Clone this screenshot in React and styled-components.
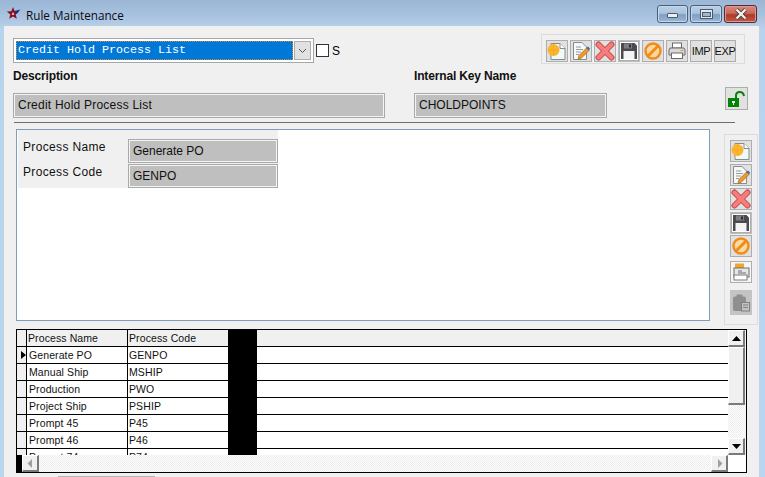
import React from "react";
import styled, { createGlobalStyle } from "styled-components";

const Global = createGlobalStyle`
  html, body { margin: 0; padding: 0; background: #bcd4ec; overflow: hidden; }
  * { box-sizing: border-box; }
`;

const Win = styled.div`
  width: 765px; height: 477px; overflow: hidden; display: flex; flex-direction: column;
  background: linear-gradient(180deg, #9cb7d5 0px, #a6c1de 14px, #bad3ec 30px, #bcd5ee 100%);
  font-family: "Liberation Sans", Arial, sans-serif; color: #000;
`;
const TitleBar = styled.div`
  height: 26px; flex: none; display: flex; align-items: flex-start; padding: 6px 8px 0 6px;
`;
const TitleText = styled.div`
  font-family: "Open Sans", sans-serif; font-size: 11.7px; line-height: 18px; margin-left: 5px; color: #0a0a14;
`;
const Caption = styled.div`
  margin-left: auto; margin-top: -1px; display: flex; gap: 2px; align-items: flex-start;
`;
const CapBtn = styled.div`
  width: ${p => p.$w}px; height: 18px; border-radius: 3px; display: flex; align-items: center; justify-content: center;
  border: 1px solid ${p => p.$close ? "#5e2530" : "#46607e"};
  box-shadow: inset 0 0 0 1px ${p => p.$close ? "#d99b90" : "#c6d8ea"};
  background: ${p => p.$close
    ? "linear-gradient(180deg,#d98a7e 0%,#c9685a 45%,#b03a28 55%,#c05a48 100%)"
    : "linear-gradient(180deg,#b9cfe6 0%,#a9c3de 45%,#7f9fc2 55%,#9ab8d6 100%)"};
`;
const MinGlyph = styled.span`
  width: 11px; height: 5px; margin-top: 3px; background: #e9eef3; border: 1px solid #4c5a6c; border-radius: 1px;
`;
const MaxGlyph = styled.span`
  width: 13px; height: 10px; background: #dfe7ef; border: 1px solid #4c5a6c; display: flex; align-items: center; justify-content: center;
  &::after { content: ""; width: 7px; height: 3px; background: #9fb6cf; border: 1px solid #4c5a6c; }
`;

const Content = styled.div`
  flex: 1; margin: 0 6px 0 4px; background: #f0f0f0; display: flex; flex-direction: column; padding: 8px 0 0 9px; position: relative;
`;
const TopRow = styled.div`
  display: flex; align-items: flex-start; height: 34px;
`;
const Combo = styled.div`
  width: 301px; height: 25px; margin-top: 4px; border: 1px solid #a6a6a6; background: #fff; padding: 2px; display: flex;
`;
const ComboValue = styled.div`
  flex: 1; background: #0078d7; color: #fff; font-family: "Liberation Mono", monospace; font-size: 11.67px; line-height: 19px;
  padding-left: 2px; outline: 1px dotted #d08a40; outline-offset: -1px;
`;
const ComboArrow = styled.div`
  width: 17px; margin-left: 1px; background: #e1e1e1; border: 1px solid #adadad; display: flex; align-items: center; justify-content: center;
`;
const Check = styled.div`
  width: 13px; height: 13px; border: 1px solid #333; background: #fff; margin: 10px 0 0 2px;
`;
const CheckLabel = styled.div`
  font-size: 12px; line-height: 14px; margin: 10px 0 0 3px;
`;
const TopTools = styled.div`
  margin-left: auto; margin-right: 14px; width: 204px; height: 30px; border: 1px solid #dcdcdc; display: flex; gap: 2px; padding: 5px 0 0 4px;
`;
const IconBtn = styled.div`
  width: 22px; height: 22px; flex: none; border: 1px solid #adadad; background: ${p => p.$active ? "#fff" : "#e1e1e1"};
  display: flex; align-items: center; justify-content: center; font-size: 11px; letter-spacing: -0.4px; color: #111;
  ${p => p.$active && "box-shadow: inset 0 0 0 1px #adadad; border-color:#bdbdbd;"}
  ${p => p.$off && "background:#c4c4c4; border-color:#c4c4c4;"}
  ${p => p.$pale && "background:#f6f6f6;"}
`;
const Labels = styled.div`
  display: grid; grid-template-columns: 401px auto; height: 17px; margin-bottom: 8px; align-items: center;
`;
const BoldLabel = styled.div`
  font-size: 12px; font-weight: 700; line-height: 14px; color: #111; margin-top: -1px;
  letter-spacing: -0.15px;
`;
const KeyRow = styled.div`
  display: flex; align-items: flex-start; height: 29px; position: relative;
`;
const ReadField = styled.div`
  width: ${p => p.$w}px; height: ${p => p.$h || 25}px; flex: none; background: #bfbfbf; border: 1px solid #a9a9a9;
  box-shadow: inset 0 0 0 1px #f4f4f4; font-size: 12px; line-height: ${p => (p.$h || 25) - 2}px; padding-left: 4px;
  color: #111; margin-left: ${p => p.$ml || 0}px; letter-spacing: ${p => p.$ls || 0}px; white-space: nowrap;
`;
const LockBtn = styled(IconBtn)`
  position: absolute; left: 712px; top: -6px; width: 23px; height: 23px;
`;
const Rule = styled.div`
  width: 721px; height: 1px; background: #6d6d6d; margin-left: 1px;
`;
const Middle = styled.div`
  display: flex; margin-top: 6px; height: 196px; align-items: flex-start;
`;
const Panel = styled.div`
  width: 694px; height: 192px; margin-left: 3px; background: #fff; border: 1px solid #7f9db9; padding: 0 0 0 1px;
`;
const FormBlock = styled.div`
  width: 260px; height: 58px; background: #f0f0f0; padding: 9px 0 0 0; display: grid; grid-template-columns: 110px 150px; grid-auto-rows: 25px;
`;
const FormLabel = styled.div`
  font-size: 12px; line-height: 14px; padding-left: 5px; letter-spacing: 0.35px; color: #111; margin-top: 1px;
`;
const SideTools = styled.div`
  width: 34px; height: 191px; margin: 5px 0 0 14px; border: 1px solid #dcdcdc; display: flex; flex-direction: column; align-items: center; padding-top: 5px;
`;
const SideBtn = styled(IconBtn)`
  margin-bottom: ${p => p.$mb}px; height: ${p => p.$h || 22}px;
`;
const Grid = styled.div`
  width: 731px; height: 144px; margin: 4px 0 0 3px; border: 1px solid #000; background: #fff; position: relative; overflow: hidden; display: flex; flex-direction: column;
`;
const Rows = styled.div`
  height: 125px; overflow: hidden; width: 712px;
`;
const Row = styled.div`
  display: grid; grid-template-columns: 10px 101px 100px 29px 1fr; height: 17px; border-bottom: 1px solid #000; font-size: 10.5px; letter-spacing: 0.1px; line-height: 16px; color: #111;
  background: ${p => p.$head ? "#f0f0f0" : "#fff"};
`;
const Indicator = styled.div`
  background: #f0f0f0; border-right: 1px solid #000; display: flex; align-items: center; justify-content: flex-end; padding-right: 0;
`;
const NameCell = styled.div`
  border-right: 1px solid #000; padding-left: ${p => p.$head ? 1 : 2}px; white-space: nowrap;
`;
const CodeCell = styled.div`
  padding-left: 1px;
`;
const BlackCell = styled.div`
  background: #000; margin-bottom: -1px;
`;
const VScroll = styled.div`
  position: absolute; right: 0; top: 0; width: 18px; height: 125px; display: flex; flex-direction: column;
  background-color: #f4f4f4; background-image: repeating-conic-gradient(#fff 0 25%, #ececec 0 50%); background-size: 2px 2px;
`;
const ScrollBtn = styled.div`
  width: ${p => p.$w || 17}px; height: ${p => p.$h || 17}px; flex: none; background: #f0f0f0; border-style: solid; border-width: 1px 2px 2px 1px;
  border-color: #fff #7a7a7a #7a7a7a #fff; display: flex; align-items: center; justify-content: center; margin-top: ${p => p.$mt || 0}px;
`;
const HScroll = styled.div`
  height: 17px; flex: none; display: flex; margin-right: 18px;
  background-color: #f4f4f4; background-image: repeating-conic-gradient(#fff 0 25%, #ececec 0 50%); background-size: 2px 2px;
`;
const HBlack = styled.div`
  width: 5px; background: #000;
`;
const HRight = styled.div`
  margin-left: auto;
`;
const BottomStrip = styled.div`
  position: absolute; left: 54px; bottom: 0; width: 97px; height: 1px; background: #b3b3b3;
`;

const Tri = ({ d, c = "#000", w = 9, h = 9 }) => (
  <svg width={w} height={h} viewBox="0 0 9 9"><path d={d} fill={c} /></svg>
);

const StarIcon = () => (
  <svg width="15" height="14" viewBox="0 0 15 14">
    <path d="M7 1L8.7 5.2L13.2 5.5L9.7 8.4L10.8 12.8L7 10.4L3.2 12.8L4.3 8.4L0.8 5.5L5.3 5.2Z" fill="#8a1020" />
    <path d="M8.5 5L14.5 3.5L10 8Z" fill="#1c2a9c" />
    <path d="M7 6L8.3 8.8H5.7Z" fill="#f3e9ea" />
  </svg>
);
const NewIcon = () => (
  <svg width="20" height="20" viewBox="0 0 20 20">
    <path d="M4 2.5H13L18 7.5V18.5H4Z" fill="#eefafa" stroke="#8a8a8a" />
    <path d="M13 2.5V7.5H18" fill="#fff" stroke="#8a8a8a" />
    <circle cx="6.5" cy="9" r="6" fill="#fbb62e" />
    <path d="M1 9H12M6.5 3V15" stroke="#f59d20" opacity="0.5" />
  </svg>
);
const EditIcon = () => (
  <svg width="20" height="20" viewBox="0 0 20 20">
    <path d="M2.5 1.5H11L15.5 6V18.5H2.5Z" fill="#f4f8f8" stroke="#8a8a8a" />
    <path d="M5 6H10M5 8.5H12M5 11H10M5 13.5H8" stroke="#9a9a9a" />
    <path d="M7 18.5L8 14.5L15.5 7L18 9.5L10.5 17Z" fill="#ee9a28" stroke="#a4661c" strokeWidth="0.7" />
    <path d="M15.5 7L17 5.5L19 7.5L18 9.5Z" fill="#2a6fc4" />
  </svg>
);
const XIcon = () => (
  <svg width="20" height="20" viewBox="0 0 20 20">
    <path d="M3.5 3.5L16.5 16.5M16.5 3.5L3.5 16.5" stroke="#c24a4a" strokeWidth="6" strokeLinecap="round" />
    <path d="M3.5 3.5L16.5 16.5M16.5 3.5L3.5 16.5" stroke="#f77c7c" strokeWidth="4" strokeLinecap="round" />
  </svg>
);
const SaveIcon = () => (
  <svg width="18" height="18" viewBox="0 0 18 18">
    <path d="M1 1H14.5L17 3.5V17H1Z" fill="#4a4a50" />
    <rect x="4" y="1.5" width="8" height="5" fill="#7e7e84" />
    <rect x="9" y="2.5" width="2" height="3" fill="#2c2c30" />
    <rect x="3.5" y="9" width="11" height="8" fill="#f4f4f4" />
  </svg>
);
const BanIcon = () => (
  <svg width="20" height="20" viewBox="0 0 20 20">
    <circle cx="10" cy="10" r="7.5" fill="#fbd9a0" stroke="#f08c18" strokeWidth="2.4" />
    <path d="M4.8 15.2L15.2 4.8" stroke="#f08c18" strokeWidth="3" />
  </svg>
);
const PrinterIcon = () => (
  <svg width="18" height="18" viewBox="0 0 18 18">
    <rect x="4.5" y="1" width="9" height="5" fill="#fff" stroke="#6a6a6a" />
    <path d="M2 6H16L17 8V13H1V8Z" fill="#d9d9d9" stroke="#6a6a6a" />
    <path d="M12.5 8.5H15.5" stroke="#e8a33c" />
    <rect x="3.5" y="11" width="11" height="5.5" fill="#fff" stroke="#6a6a6a" />
  </svg>
);
const PrintPreviewIcon = () => (
  <svg width="20" height="20" viewBox="0 0 20 20">
    <rect x="4" y="1.5" width="9" height="6" fill="#f2a52c" />
    <rect x="3" y="6" width="15" height="9" fill="#e6e6e6" stroke="#6e6e6e" />
    <path d="M7 9H11M7 11H15" stroke="#6e6e6e" />
    <rect x="3" y="13" width="13" height="5" fill="#fff" stroke="#7a7a7a" />
  </svg>
);
const PasteIcon = () => (
  <svg width="20" height="20" viewBox="0 0 20 20">
    <rect x="2" y="3.5" width="13" height="14.5" rx="2" fill="#8f8f8f" />
    <rect x="5.5" y="1.5" width="6" height="4" rx="1" fill="#8f8f8f" />
    <rect x="10.5" y="9.5" width="8" height="8.5" fill="#c4c4c4" stroke="#7f7f7f" />
    <path d="M12 12H17M12 14.5H17" stroke="#7f7f7f" />
  </svg>
);
const LockIcon = () => (
  <svg width="19" height="18" viewBox="0 0 19 18">
    <path d="M9 8.5V5.5C9 3 10.6 2 12.8 2C15 2 16.5 3 17 6" fill="none" stroke="#058205" strokeWidth="2" />
    <rect x="1" y="8" width="11" height="9" fill="#058205" />
    <rect x="5" y="11" width="3" height="2" fill="#e8f4e8" />
    <rect x="6" y="12" width="1" height="3" fill="#e8f4e8" />
  </svg>
);

const data = [
  ["Generate PO", "GENPO"],
  ["Manual Ship", "MSHIP"],
  ["Production", "PWO"],
  ["Project Ship", "PSHIP"],
  ["Prompt 45", "P45"],
  ["Prompt 46", "P46"],
  ["Prompt 74", "P74"],
];

export default function App() {
  return (
    <Win>
      <Global />
      <TitleBar>
        <StarIcon />
        <TitleText>Rule Maintenance</TitleText>
        <Caption>
          <CapBtn $w={31}><MinGlyph /></CapBtn>
          <CapBtn $w={32}><MaxGlyph /></CapBtn>
          <CapBtn $w={33} $close>
            <svg width="14" height="12" viewBox="0 0 14 12"><path d="M2.5 1.5L11.5 10.5M11.5 1.5L2.5 10.5" stroke="#4a3a3a" strokeWidth="4" /><path d="M2.5 1.5L11.5 10.5M11.5 1.5L2.5 10.5" stroke="#f2efee" strokeWidth="2.4" /></svg>
          </CapBtn>
        </Caption>
      </TitleBar>
      <Content>
        <TopRow>
          <Combo>
            <ComboValue>Credit Hold Process List</ComboValue>
            <ComboArrow>
              <svg width="9" height="6" viewBox="0 0 9 6"><path d="M1 1L4.5 4.5L8 1" fill="none" stroke="#555" /></svg>
            </ComboArrow>
          </Combo>
          <Check />
          <CheckLabel>S</CheckLabel>
          <TopTools>
            <IconBtn><NewIcon /></IconBtn>
            <IconBtn><EditIcon /></IconBtn>
            <IconBtn><XIcon /></IconBtn>
            <IconBtn $active><SaveIcon /></IconBtn>
            <IconBtn><BanIcon /></IconBtn>
            <IconBtn><PrinterIcon /></IconBtn>
            <IconBtn>IMP</IconBtn>
            <IconBtn>EXP</IconBtn>
          </TopTools>
        </TopRow>
        <Labels>
          <BoldLabel>Description</BoldLabel>
          <BoldLabel>Internal Key Name</BoldLabel>
        </Labels>
        <KeyRow>
          <ReadField $w={372} $ls={0.22}>Credit Hold Process List</ReadField>
          <ReadField $w={193} $ml={29}>CHOLDPOINTS</ReadField>
          <LockBtn><LockIcon /></LockBtn>
        </KeyRow>
        <Rule />
        <Middle>
          <Panel>
            <FormBlock>
              <FormLabel>Process Name</FormLabel>
              <ReadField $w={150} $h={24}>Generate PO</ReadField>
              <FormLabel>Process Code</FormLabel>
              <ReadField $w={150} $h={24}>GENPO</ReadField>
            </FormBlock>
          </Panel>
          <SideTools>
            <SideBtn $mb={2}><NewIcon /></SideBtn>
            <SideBtn $mb={2}><EditIcon /></SideBtn>
            <SideBtn $mb={2}><XIcon /></SideBtn>
            <SideBtn $mb={1} $active><SaveIcon /></SideBtn>
            <SideBtn $mb={4}><BanIcon /></SideBtn>
            <SideBtn $mb={7} $pale><PrintPreviewIcon /></SideBtn>
            <SideBtn $mb={0} $h={25} $off><PasteIcon /></SideBtn>
          </SideTools>
        </Middle>
        <Grid>
          <Rows>
            <Row $head>
              <Indicator />
              <NameCell $head>Process Name</NameCell>
              <CodeCell>Process Code</CodeCell>
              <BlackCell />
              <div />
            </Row>
            {data.map((r, i) => (
              <Row key={r[0]}>
                <Indicator>
                  {i === 0 && <svg width="5" height="8" viewBox="0 0 5 8"><path d="M0 0L5 4L0 8Z" fill="#000" /></svg>}
                </Indicator>
                <NameCell>{r[0]}</NameCell>
                <CodeCell>{r[1]}</CodeCell>
                <BlackCell />
                <div />
              </Row>
            ))}
          </Rows>
          <VScroll>
            <ScrollBtn><Tri d="M4.5 2L9 7H0Z" /></ScrollBtn>
            <ScrollBtn $h={58}></ScrollBtn>
            <ScrollBtn $mt={33}><Tri d="M0 2H9L4.5 7Z" /></ScrollBtn>
          </VScroll>
          <HScroll>
            <HBlack />
            <ScrollBtn $w={17} $h={17}><Tri c="#a0a0a0" d="M6 0V9L1.5 4.5Z" /></ScrollBtn>
            <HRight>
              <ScrollBtn $w={17} $h={17}><Tri c="#a0a0a0" d="M3 0V9L7.5 4.5Z" /></ScrollBtn>
            </HRight>
          </HScroll>
        </Grid>
        <BottomStrip />
      </Content>
    </Win>
  );
}
